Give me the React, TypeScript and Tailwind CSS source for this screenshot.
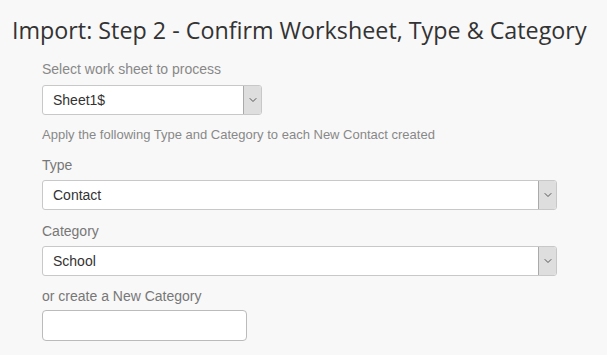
import { ChevronDown } from 'lucide-react'

function Select({ value, width }: { value: string; width: string }) {
  return (
    <div className={`flex h-[30px] ${width} overflow-hidden rounded-[3px] border border-[#c8c8c8] bg-white`}>
      <div className="flex flex-1 items-center pl-[10px] text-[14px] text-[#333]">{value}</div>
      <div className="flex w-[18px] items-center justify-center border-l border-[#aaa] bg-[#dedede]">
        <ChevronDown size={12} strokeWidth={2} className="text-[#555]" />
      </div>
    </div>
  )
}

export default function App() {
  return (
    <div className="h-[355px] w-[607px] bg-[#f8f8f8] font-['Liberation_Sans',Arial,sans-serif]">
      <h1 className="pl-[12px] pt-[15px] font-['Open_Sans',sans-serif] text-[23.3px] leading-[30px] text-[#333]">
        Import: Step 2 - Confirm Worksheet, Type &amp; Category
      </h1>
      <div className="flex flex-col pl-[42px] pt-[15px]">
        <label className="text-[14px] leading-[18px] text-[#888]">Select work sheet to process</label>
        <div className="mt-[7px]">
          <Select value="Sheet1$" width="w-[220px]" />
        </div>
        <p className="mt-[12px] text-[13px] leading-[16px] text-[#888]">
          Apply the following Type and Category to each New Contact created
        </p>
        <label className="mt-[13px] text-[14px] leading-[18px] text-[#777]">Type</label>
        <div className="mt-[6px]">
          <Select value="Contact" width="w-[515px]" />
        </div>
        <label className="mt-[12px] text-[14px] leading-[18px] text-[#777]">Category</label>
        <div className="mt-[6px]">
          <Select value="School" width="w-[515px]" />
        </div>
        <label className="mt-[11px] text-[14px] leading-[18px] text-[#777]">or create a New Category</label>
        <input className="mt-[5px] h-[31px] w-[205px] rounded-[4px] border border-[#bbb] bg-white outline-none" />
      </div>
    </div>
  )
}
